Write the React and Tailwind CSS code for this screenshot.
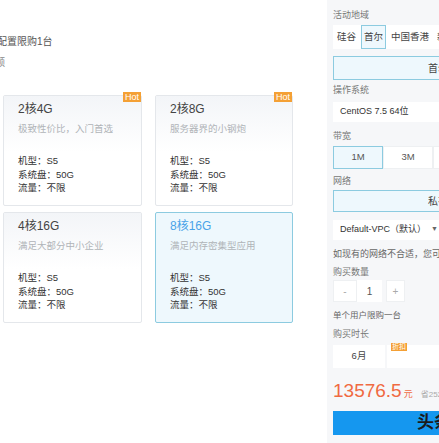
import React, { useState } from 'react';

const plans = [
  { id: 1, title: '2核4G', desc: '极致性价比，入门首选', hot: true },
  { id: 2, title: '2核8G', desc: '服务器界的小钢炮', hot: true },
  { id: 3, title: '4核16G', desc: '满足大部分中小企业', hot: false },
  { id: 4, title: '8核16G', desc: '满足内存密集型应用', hot: false },
];

function PlanCard({ plan, selected, onClick }) {
  return (
    <div
      onClick={onClick}
      className={`relative h-[111px] border rounded-[2px] cursor-pointer ${
        selected ? 'border-[#8ccbe0] bg-[#eef8fd]' : 'border-[#e4e7eb] bg-white'
      }`}
    >
      {plan.hot && (
        <span className="absolute -top-[4px] right-0 bg-[#f4a035] text-white text-[9px] leading-[10px] px-[2px]">
          Hot
        </span>
      )}
      <div
        className={`h-[56px] px-[14px] pt-[5px] ${
          selected ? '' : 'bg-gradient-to-b from-[#f3f5f8] to-white'
        }`}
      >
        <div className={`text-[12px] leading-[16px] ${selected ? 'text-[#4aa3e8]' : 'text-[#444]'}`}>
          {plan.title}
        </div>
        <div className="mt-[5px] text-[9.5px] leading-[13px] text-[#b0b4b8]">{plan.desc}</div>
      </div>
      <div className="px-[14px] pt-[2px] text-[9.5px] leading-[13.5px] text-[#333]">
        <div>机型：S5</div>
        <div>系统盘：50G</div>
        <div>流量：不限</div>
      </div>
    </div>
  );
}

function Label({ children, className = '' }) {
  return <div className={`h-[12px] text-[9px] leading-[12px] text-[#777] ${className}`}>{children}</div>;
}

export default function App() {
  const [plan, setPlan] = useState(4);
  const [region, setRegion] = useState('首尔');
  const [bw, setBw] = useState('1M');
  const [qty, setQty] = useState(1);

  return (
    <div
      className="flex w-[439px] h-[443px] overflow-hidden bg-white"
      style={{ fontFamily: '"Liberation Sans", "Noto Sans CJK SC", sans-serif' }}
    >
      {/* left: plans */}
      <div className="w-[327px] shrink-0 bg-white">
        <div className="pt-[35px] -ml-[3px] text-[10px] leading-[13px] text-[#555]">配置限购1台</div>
        <div className="mt-[8px] -ml-[5px] text-[10px] leading-[13px] text-[#888]">额</div>
        <div className="mt-[26px] pl-[3px] grid grid-cols-[139px_138px] gap-x-[13px] gap-y-[6px]">
          {plans.map((p) => (
            <PlanCard key={p.id} plan={p} selected={plan === p.id} onClick={() => setPlan(p.id)} />
          ))}
        </div>
      </div>

      {/* right: options */}
      <div className="flex-1 min-w-0 bg-[#f6f7f9] pl-[6px] pt-[9px] overflow-hidden">
        <Label>活动地域</Label>
        <div className="mt-[4px] h-[24px] w-[140px] bg-white flex items-stretch gap-[2px] pl-[1px] text-[9.5px] text-[#444]">
          {['硅谷', '首尔', '中国香港', '新加坡'].map((r) => (
            <button
              key={r}
              onClick={() => setRegion(r)}
              className={`px-[2px] border whitespace-nowrap ${
                region === r ? 'border-[#8ccbe0] bg-[#eef8fd]' : 'border-transparent'
              }`}
            >
              {r}
            </button>
          ))}
        </div>
        <div className="mt-[7px] h-[24px] w-[210px] border border-[#8ccbe0] bg-[#eef8fd] flex items-center justify-center text-[10px] text-[#444]">
          首尔
        </div>

        <Label className="mt-[4px]">操作系统</Label>
        <div className="mt-[6px] h-[20px] w-[140px] bg-white flex items-center pl-[7px] text-[9px] text-[#333] whitespace-nowrap">
          CentOS 7.5 64位
        </div>

        <Label className="mt-[8px]">带宽</Label>
        <div className="mt-[4px] h-[23px] w-[160px] flex bg-white text-[9.5px] text-[#555]">
          {['1M', '3M', '5M'].map((b) => (
            <button
              key={b}
              onClick={() => setBw(b)}
              className={`w-[50px] shrink-0 border ${
                bw === b ? 'border-[#8ccbe0] bg-[#eef8fd]' : 'border-[#eef0f2]'
              }`}
            >
              {b}
            </button>
          ))}
        </div>

        <Label className="mt-[6px]">网络</Label>
        <div className="mt-[3px] h-[22px] w-[230px] border border-[#8ccbe0] bg-[#eef8fd] flex items-center justify-center text-[10px] text-[#444]">
          私有网络
        </div>
        <div className="relative mt-[8px] h-[20px] w-[140px] bg-white flex items-center pl-[7px] text-[9px] text-[#333] whitespace-nowrap">
          Default-VPC（默认）
          <span className="absolute left-[98px] top-[4px] text-[7px] text-[#666]">▼</span>
        </div>
        <div className="mt-[8px] text-[9px] leading-[12px] text-[#666] whitespace-nowrap">
          如现有的网络不合适，您可以去控制台新建
        </div>

        <Label className="mt-[6px]">购买数量</Label>
        <div className="mt-[2px] h-[22px] flex text-[10px] text-[#555]">
          <button
            onClick={() => setQty(Math.max(1, qty - 1))}
            className="w-[24px] bg-white border border-[#eef0f2] text-[#aaa]"
          >
            -
          </button>
          <div className="w-[25px] bg-white flex items-center justify-center">{qty}</div>
          <button
            onClick={() => setQty(qty)}
            className="ml-[4px] w-[19px] bg-white border border-[#eef0f2] text-[#aaa]"
          >
            +
          </button>
        </div>
        <div className="mt-[7px] h-[12px] text-[8.5px] leading-[12px] text-[#666]">单个用户限购一台</div>

        <Label className="mt-[7px]">购买时长</Label>
        <div className="mt-[5px] h-[23px] flex gap-[2px]">
          <div className="relative w-[75px] bg-white flex items-center justify-center text-[9.5px] text-[#444]">
            6月
            <span className="absolute -top-[2px] left-[58px] bg-[#f4a035] text-white text-[7px] leading-[8px] px-[1px] whitespace-nowrap">
              折扣
            </span>
          </div>
          <div className="w-[75px] bg-white" />
        </div>

        <div className="mt-[12px] flex items-baseline whitespace-nowrap">
          <span className="text-[19px] leading-[22px] text-[#f06a42]">13576.5</span>
          <span className="ml-[2px] text-[9px] text-[#f06a42]">元</span>
          <span className="ml-[8px] text-[8px] text-[#aaa]">省252</span>
        </div>

        <button className="mt-[9px] h-[24px] w-[200px] bg-[#1597ef] flex items-center pl-[84px] text-[17px] font-bold text-[#1b1b1b] whitespace-nowrap">
          头条
        </button>
      </div>
    </div>
  );
}
